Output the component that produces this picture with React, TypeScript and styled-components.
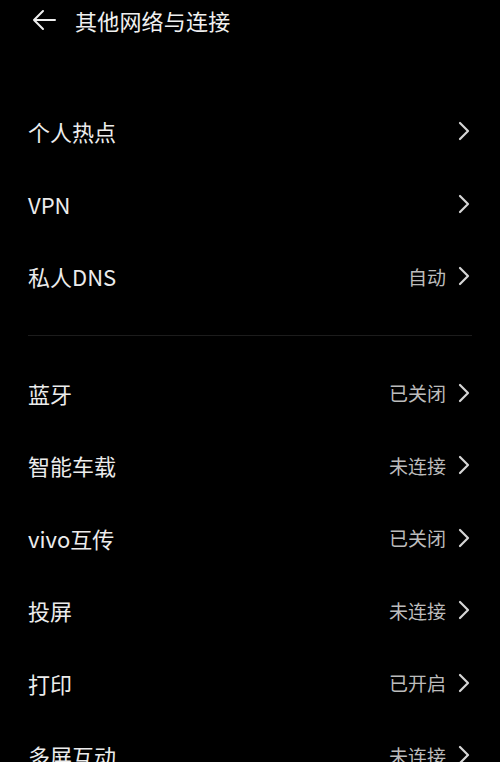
import React from "react";
import styled, { createGlobalStyle } from "styled-components";

const GlobalStyle = createGlobalStyle`
  html, body {
    margin: 0;
    padding: 0;
    background: #000;
  }
  body {
    font-family: "Noto Sans CJK SC", "Noto Sans", sans-serif;
    color: #ececec;
  }
`;

const Page = styled.div`
  width: 500px;
  height: 762px;
  overflow: hidden;
  background: #000;
`;

const Header = styled.div`
  height: 40px;
  display: flex;
  align-items: center;
  padding-left: 31px;
  gap: 18px;
`;

const Title = styled.div`
  font-size: 22px;
  font-weight: 400;
  color: #f0f0f0;
  letter-spacing: 0.2px;
`;

const List = styled.div`
  padding-top: 55px;
`;

const Row = styled.div`
  height: 72.5px;
  display: flex;
  align-items: center;
  padding: 0 30px 0 28px;
`;

const Label = styled.div`
  flex: 1;
  font-size: 22px;
  color: #ececec;
`;

const Value = styled.div`
  font-size: 19px;
  color: #bcbcbc;
  margin-right: 12px;
`;

const Divider = styled.div`
  height: 1px;
  background: #1c1c1c;
  margin: 22px 28px 21px;
`;

const BackArrow = () => (
  <svg width="26" height="24" viewBox="0 0 26 24" fill="none">
    <path
      d="M24 12H3M12 3L3 12L12 21"
      stroke="#eeeeee"
      strokeWidth="2"
      strokeLinecap="round"
      strokeLinejoin="round"
    />
  </svg>
);

const Chevron = () => (
  <svg width="12" height="20" viewBox="0 0 12 20" fill="none">
    <path
      d="M2 2L10 10L2 18"
      stroke="#d6d6d6"
      strokeWidth="2.2"
      strokeLinecap="round"
      strokeLinejoin="round"
    />
  </svg>
);

type Item = { label: string; value?: string };

const groupOne: Item[] = [
  { label: "个人热点" },
  { label: "VPN" },
  { label: "私人DNS", value: "自动" },
];

const groupTwo: Item[] = [
  { label: "蓝牙", value: "已关闭" },
  { label: "智能车载", value: "未连接" },
  { label: "vivo互传", value: "已关闭" },
  { label: "投屏", value: "未连接" },
  { label: "打印", value: "已开启" },
  { label: "多屏互动", value: "未连接" },
];

const SettingRow = ({ label, value }: Item) => (
  <Row>
    <Label>{label}</Label>
    {value && <Value>{value}</Value>}
    <Chevron />
  </Row>
);

export default function App() {
  return (
    <Page>
      <GlobalStyle />
      <Header>
        <BackArrow />
        <Title>其他网络与连接</Title>
      </Header>
      <List>
        {groupOne.map((item) => (
          <SettingRow key={item.label} {...item} />
        ))}
        <Divider />
        {groupTwo.map((item) => (
          <SettingRow key={item.label} {...item} />
        ))}
      </List>
    </Page>
  );
}
